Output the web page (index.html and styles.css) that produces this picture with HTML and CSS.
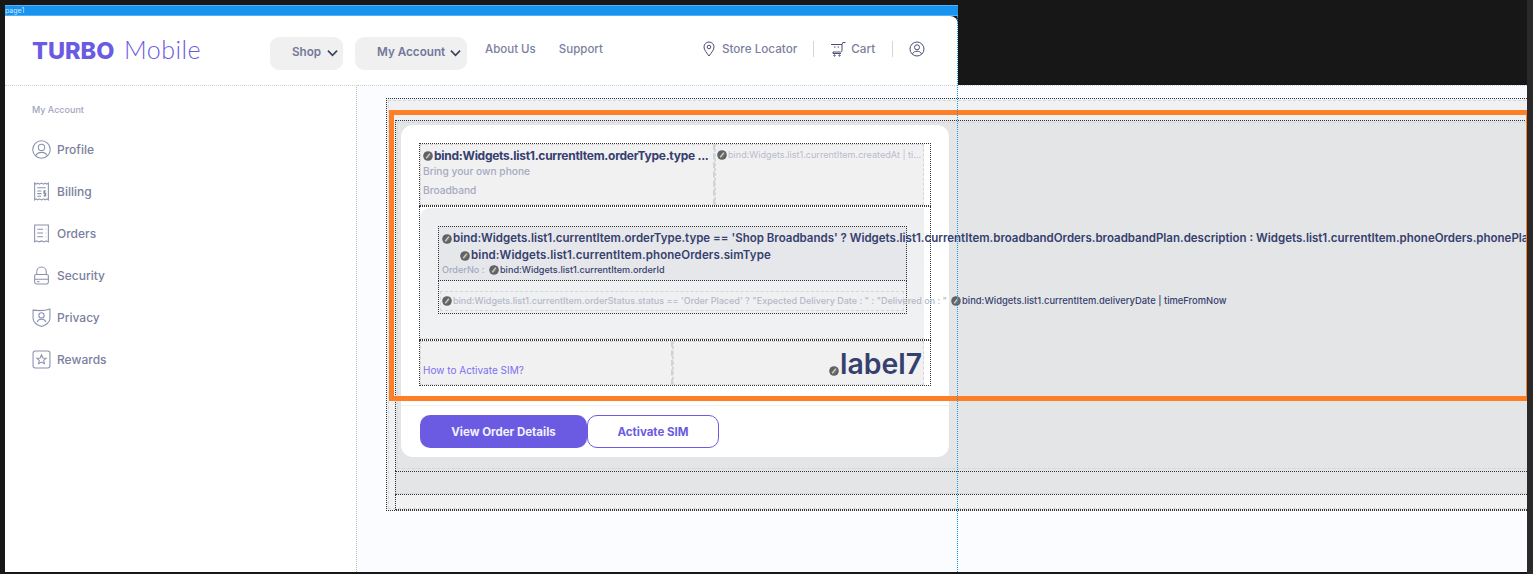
FILE: index.html
```html
<!DOCTYPE html>
<html lang="en">
<head>
    <meta charset="UTF-8">
    <meta name="viewport" content="width=device-width, initial-scale=1.0">
    <title>Turbo Mobile</title>
    <link rel="stylesheet" href="styles.css">
</head>
<body>
    <svg class="defs" width="0" height="0">
        <symbol id="bind" viewBox="0 0 10 10">
            <circle cx="5" cy="5" r="4.8" fill="#5f6266"/>
            <path d="M3.2 7.2 6.9 2.6" stroke="#d8cdb8" stroke-width="1.5" fill="none"/>
            <path d="M4.6 7.4 7.4 4" stroke="#8d8676" stroke-width="1" fill="none"/>
        </symbol>
    </svg>

    <div class="frame">
        <div class="widget-bar">page1</div>

        <header class="top-nav">
            <div class="logo"><b>TURBO</b> <span>Mobile</span></div>
            <div class="pill pill-shop">Shop
                <svg class="chev" viewBox="0 0 12 8"><path d="M1 1.5 6 6.5 11 1.5"/></svg>
            </div>
            <div class="pill pill-account">My Account
                <svg class="chev" viewBox="0 0 12 8"><path d="M1 1.5 6 6.5 11 1.5"/></svg>
            </div>
            <a class="nav-link nav-about">About Us</a>
            <a class="nav-link">Support</a>
            <div class="nav-right">
                <svg class="ico-nav ico-pin" viewBox="0 0 12 16"><path d="M6 15C3.5 11.500 1 9 1 6a5 5 0 0 1 10 0c0 3-2.500 5.500-5 9Z"/><circle cx="6" cy="6" r="1.800"/></svg>
                <span class="nav-text">Store Locator</span>
                <i class="nav-sep sep-one"></i>
                <svg class="ico-nav ico-cart" viewBox="0 0 16 16"><path d="M1 3.500H12V9.500C12 10.500 11.500 11 10.500 11H3V12.500H11M12 3.500 12.800 1.500H15.500M4 6H5.500M7.500 6H9"/><circle cx="4.500" cy="14.500" r=".7"/><circle cx="9.500" cy="14.500" r=".7"/></svg>
                <span class="nav-text">Cart</span>
                <i class="nav-sep sep-two"></i>
                <svg class="ico-nav ico-user" viewBox="0 0 16 16"><circle cx="8" cy="8" r="7"/><circle cx="8" cy="6.300" r="2.500"/><path d="M3.500 12.800C4.500 10.800 6 10.300 8 10.300S11.500 10.800 12.500 12.800"/></svg>
            </div>
        </header>

        <div class="main">
            <aside class="sidebar">
                <p class="side-title">My Account</p>
                <a class="side-item">
                    <svg viewBox="0 0 18 18"><circle cx="9" cy="9" r="8.300"/><circle cx="9" cy="7" r="3"/><path d="M3.500 15C4.500 12.500 6.500 11.700 9 11.700S13.500 12.500 14.500 15"/></svg>
                    Profile
                </a>
                <a class="side-item">
                    <svg viewBox="0 0 18 18"><path d="M2.500 1 4 2 5.500 1 7 2 9 1 11 2 12.500 1 14 2 15.500 1V17L14 16 12.500 17 11 16 9 17 7 16 5.500 17 4 16 2.500 17ZM5 5.500H13M5 8.500H9M5 11H9M5 13.500H8.500"/><path d="M13 8.500H11.300V10.800H13V13H11M12.100 7.500V14"/></svg>
                    Billing
                </a>
                <a class="side-item">
                    <svg viewBox="0 0 18 18"><path d="M2.500 1H15.500V17L13.500 16 11.500 17 9 16 6.500 17 4.500 16 2.500 17ZM5 5H10.500M5 8.500H10.500M5 12H10.500M13 5H13.500M13 8.500H13.500M13 12H13.500"/></svg>
                    Orders
                </a>
                <a class="side-item">
                    <svg viewBox="0 0 18 18"><path d="M4.500 8V5.500C4.500 3 6.500 1 9 1S13.500 3 13.500 5.500V8"/><rect x="2.500" y="8" width="13" height="9" rx="1.500"/><path d="M2.500 12.500H15.500M5 14.800H7"/></svg>
                    Security
                </a>
                <a class="side-item">
                    <svg viewBox="0 0 18 18"><path d="M1 2C6 2.700 12 2.700 17 1V10C17 13.500 13 16.500 9 17.500 5 16.500 1 13.500 1 10Z"/><circle cx="9" cy="7" r="2.500"/><path d="M4.800 13.300C5.500 11.300 7 10.700 9 10.700S12.500 11.300 13.200 13.300"/></svg>
                    Privacy
                </a>
                <a class="side-item">
                    <svg viewBox="0 0 18 18"><rect x="1" y="1" width="16" height="16" rx="2"/><path d="M9 4.500 10.300 7.500 13.500 7.800 11.100 9.900 11.800 13 9 11.400 6.200 13 6.900 9.900 4.500 7.800 7.700 7.500Z"/></svg>
                    Rewards
                </a>
            </aside>

            <section class="content">
                <div class="canvas">
                    <div class="list">
                        <div class="card">
                            <div class="grid-row row-head">
                                <div class="cell cell-type">
                                    <p class="title-line"><svg class="bind"><use href="#bind"/></svg>bind:Widgets.list1.currentItem.orderType.type ...</p>
                                    <p class="sub-line">Bring your own phone</p>
                                    <p class="sub-line sub-last">Broadband</p>
                                </div>
                                <div class="cell cell-date">
                                    <p class="date-line"><svg class="bind"><use href="#bind"/></svg>bind:Widgets.list1.currentItem.createdAt | ti...</p>
                                </div>
                            </div>

                            <div class="grid-row row-body">
                                <div class="plan-panel">
                                    <div class="plan-box">
                                        <p class="plan-line"><svg class="bind"><use href="#bind"/></svg>bind:Widgets.list1.currentItem.orderType.type == 'Shop Broadbands' ? Widgets.list1.currentItem.broadbandOrders.broadbandPlan.description : Widgets.list1.currentItem.phoneOrders.phonePlan.description</p>
                                        <p class="plan-line plan-sim"><svg class="bind"><use href="#bind"/></svg>bind:Widgets.list1.currentItem.phoneOrders.simType</p>
                                        <p class="order-line"><span class="order-key">OrderNo :</span><svg class="bind"><use href="#bind"/></svg>bind:Widgets.list1.currentItem.orderId</p>
                                    </div>
                                    <div class="status-box">
                                        <p class="status-line"><span class="status-text"><svg class="bind"><use href="#bind"/></svg>bind:Widgets.list1.currentItem.orderStatus.status == 'Order Placed' ? "Expected Delivery Date : " : "Delivered on : "</span><span class="delivery"><svg class="bind"><use href="#bind"/></svg>bind:Widgets.list1.currentItem.deliveryDate | timeFromNow</span></p>
                                    </div>
                                </div>
                            </div>

                            <div class="grid-row row-foot">
                                <div class="cell cell-help"><a class="help-link">How to Activate SIM?</a></div>
                                <div class="cell cell-price"><svg class="bind"><use href="#bind"/></svg><span class="price">label7</span></div>
                            </div>

                            <div class="actions">
                                <button class="btn btn-solid" type="button">View Order Details</button>
                                <button class="btn btn-line" type="button">Activate SIM</button>
                            </div>
                        </div>
                    </div>
                    <div class="strip-grey"></div>
                    <div class="strip-light"></div>
                </div>
            </section>
        </div>
    </div>

    <!-- studio selection marks, they sit on top of the page -->
    <div class="select-box"></div>
    <div class="guide-line"></div>
</body>
</html>
```

FILE: styles.css
```css
*{
    box-sizing: border-box;
}
html, body{
    margin: 0;
    height: 574px;
    overflow: hidden;
}
body{
    position: relative;
    padding: 5px 6px 2px 5px;
    background-color: #171717;
    font-family: Inter, "Liberation Sans", sans-serif;
    color: #7b809e;
}
body::after{
    content: "";
    position: absolute;
    top: 0;
    right: 0;
    width: 6px;
    height: 574px;
    background-color: #2a2a2a;
}
p{
    margin: 0;
}
.defs{
    position: absolute;
}
.bind{
    width: 10px;
    height: 10px;
    flex: none;
    margin-right: 1px;
}

/* top of the frame */
.frame{
    width: 1522px;
    height: 567px;
}
.widget-bar{
    width: 953px;
    height: 11px;
    background-color: #1793f0;
    border-top: 1px solid #55b0f5;
    border-bottom: 1px solid #55b0f5;
    color: #cfe8fb;
    font-size: 7px;
    line-height: 9px;
    overflow: hidden;
}
.top-nav{
    display: flex;
    align-items: flex-start;
    width: 953px;
    height: 69px;
    padding-left: 27px;
    background-color: #fff;
    border-top-right-radius: 8px;
}
.logo{
    width: 238px;
    padding-top: 18px;
    color: #6a5be2;
    font-size: 23.500px;
    line-height: 30px;
    white-space: nowrap;
}
.logo b{
    font-weight: 800;
}
.logo span{
    margin-left: 3px;
    font-family: Lato, sans-serif;
    font-weight: 300;
    letter-spacing: .5px;
    font-size: 25px;
}
.pill{
    display: flex;
    align-items: center;
    height: 33px;
    margin-top: 21px;
    padding-bottom: 4px;
    background-color: #f0f0f0;
    border-radius: 9px;
    font-size: 11.700px;
    font-weight: 600;
    color: #73789a;
}
.pill-shop{
    width: 73px;
    padding-left: 22px;
}
.pill-account{
    width: 112px;
    margin-left: 12px;
    padding-left: 22px;
}
.chev{
    width: 11px;
    height: 8px;
    margin: 2px 0 0 6px;
    fill: none;
    stroke: #3b4260;
    stroke-width: 1.8;
}
.pill-account .chev{
    margin-left: 5px;
}
.nav-link{
    margin: 26px 0 0 23px;
    font-size: 11.500px;
    line-height: 15px;
    font-weight: 500;
}
.nav-about{
    margin-left: 18px;
}
.nav-right{
    display: flex;
    align-items: center;
    margin: 24px 0 0 100px;
    height: 17px;
    font-size: 11.700px;
    font-weight: 500;
}
.ico-nav{
    flex: none;
    fill: none;
    stroke: #4a4f70;
    stroke-width: 1;
}
.ico-pin{
    width: 12px;
    height: 16px;
    margin-right: 7px;
}
.ico-cart{
    width: 16px;
    height: 16px;
    margin-right: 5px;
}
.ico-user{
    width: 16px;
    height: 16px;
}
.nav-sep{
    width: 1px;
    height: 16px;
    background-color: #d5d6dc;
}
.sep-one{
    margin: 0 16px;
}
.sep-two{
    margin: 0 16px 0 17px;
}

/* sidebar */
.main{
    display: flex;
    height: 487px;
}
.sidebar{
    width: 352px;
    flex: none;
    padding: 18px 0 0 27px;
    background-color: #fff;
    border-top: 1px dotted #d0d0d0;
    border-right: 1px dotted #bdbdbd;
}
.side-title{
    margin-bottom: 24px;
    font-size: 9px;
    line-height: 11px;
    font-weight: 500;
    color: #a2a6bd;
}
.side-item{
    display: flex;
    align-items: center;
    height: 20px;
    margin-bottom: 22px;
    font-size: 12px;
    font-weight: 500;
}
.side-item svg{
    width: 19px;
    height: 19px;
    margin-right: 6px;
    fill: none;
    stroke: #8a90ae;
    stroke-width: 1;
}

/* canvas with the order card */
.content{
    flex: 1;
    padding: 12px 0 0 29px;
    background-color: #fbfcff;
    border-top: 1px dotted #d0d0d0;
}
.canvas{
    height: 413px;
    margin-right: -6px;
    padding: 21px 0 0 8px;
    background-color: #f0f1f2;
    border: 1px dotted #333;
    border-right: none;
    outline: 1px dashed #d6d6d6;
    outline-offset: -3px;
}
.list{
    height: 351px;
    padding: 4px 0 0 5px;
    background-color: #e4e5e7;
    border-top: 1px dotted #333;
    border-left: 1px dotted #333;
    outline: 1px dashed #d6d6d6;
    outline-offset: -3px;
}
.card{
    width: 548px;
    height: 332px;
    padding: 18px 18px 0;
    background-color: #fff;
    border-radius: 12px;
}
.grid-row{
    display: flex;
    width: 512px;
    border: 1px dotted #333;
    padding-right: 6px;
}
.cell{
    background-color: #f1f1f2;
    outline: 1px dashed #d6d6d6;
    outline-offset: -1px;
}
.row-head{
    height: 63px;
}
.cell-type{
    width: 295px;
    flex: none;
    padding: 4px 0 0 3px;
    border-right: 2px dashed #d2d2d2;
}
.title-line{
    display: flex;
    align-items: center;
    font-size: 12px;
    line-height: 16px;
    font-weight: 700;
    color: #35406e;
    white-space: nowrap;
    letter-spacing: -.28px;
}
.sub-line{
    margin-top: 1px;
    font-size: 10.200px;
    line-height: 13px;
    font-weight: 500;
    color: #a5a9c0;
    white-space: nowrap;
}
.sub-last{
    margin-top: 6px;
}
.cell-date{
    flex: 1;
    padding: 4px 0 0 2px;
}
.date-line{
    display: flex;
    align-items: center;
    font-size: 9.100px;
    line-height: 14px;
    color: #b9bccd;
    white-space: nowrap;
}
.row-body{
    height: 134px;
}
.plan-panel{
    flex: 1;
    margin-top: 1px;
    padding: 18px 0 0 18px;
    background: linear-gradient(#eeeff1, #f0f1f2);
    border-bottom: 1px dashed #d2d2d2;
    border-top-left-radius: 10px;
}
.plan-box{
    width: 469px;
    height: 55px;
    padding: 3px 0 0 3px;
    background-color: #e6e7ea;
    border: 1px dotted #333;
}
.plan-line{
    display: flex;
    align-items: center;
    font-size: 11.500px;
    line-height: 17px;
    font-weight: 600;
    color: #35406e;
    white-space: nowrap;
}
.plan-sim{
    padding-left: 18px;
    letter-spacing: .1px;
}
.order-line{
    display: flex;
    align-items: center;
    font-size: 9.100px;
    line-height: 12px;
    font-weight: 500;
    color: #35406e;
    white-space: nowrap;
}
.order-key{
    width: 47px;
    color: #a5a9c0;
}
.status-box{
    width: 469px;
    height: 33px;
    padding: 10px 2px 0 1px;
    border: 1px dotted #333;
    border-top: none;
    background-color: #eff0f1;
}
.status-line{
    display: flex;
    align-items: center;
    height: 20px;
    padding-left: 1px;
    font-size: 9px;
    line-height: 14px;
    font-weight: 500;
    white-space: nowrap;
    border: 1px dashed #d6d6d6;
}
.status-text{
    display: flex;
    align-items: center;
    width: 509px;
    flex: none;
    color: #b5b8ca;
}
.delivery{
    display: flex;
    align-items: center;
    font-size: 9.400px;
    color: #35406e;
}
.row-foot{
    height: 46px;
}
.cell-help{
    width: 253px;
    flex: none;
    padding: 22px 0 0 3px;
    border-right: 2px dashed #d2d2d2;
}
.help-link{
    display: block;
    font-size: 10px;
    line-height: 14px;
    color: #7d6ff0;
}
.cell-price{
    flex: 1;
    display: flex;
    align-items: flex-end;
    justify-content: flex-end;
    padding: 0 2px 6px 0;
}
.cell-price .bind{
    margin-bottom: 3px;
}
.price{
    font-size: 28.400px;
    line-height: 30px;
    font-weight: 600;
    color: #35406e;
}
.actions{
    display: flex;
    margin-top: 19px;
    padding-top: 9px;
    border-top: 1px solid #f1f1f1;
    margin-left: -18px;
    margin-right: -18px;
    padding-left: 19px;
}
.btn{
    height: 33px;
    border-radius: 10px;
    font-family: inherit;
    font-size: 11.500px;
    font-weight: 700;
    cursor: pointer;
}
.btn-solid{
    width: 167px;
    background-color: #6a5be2;
    border: none;
    color: #f3f1ff;
}
.btn-line{
    width: 132px;
    background-color: #fff;
    border: 1px solid #6a5be2;
    color: #6a5be2;
}
.strip-grey{
    height: 23px;
    background-color: #e4e5e7;
    border-top: 1px dotted #333;
    border-left: 1px dotted #333;
    border-bottom: 1px dashed #d2d2d2;
}
.strip-light{
    height: 16px;
    background-color: #f1f1f2;
    border-top: 1px dotted #333;
    border-left: 1px dotted #333;
    border-bottom: 1px dotted #333;
}

/* selection marks */
.select-box{
    position: absolute;
    left: 389px;
    top: 110px;
    width: 1142px;
    height: 291px;
    border: 5px solid #ff7f27;
}
.guide-line{
    position: absolute;
    left: 957px;
    top: 16px;
    height: 556px;
    border-left: 1px dotted #1793f0;
}
```
